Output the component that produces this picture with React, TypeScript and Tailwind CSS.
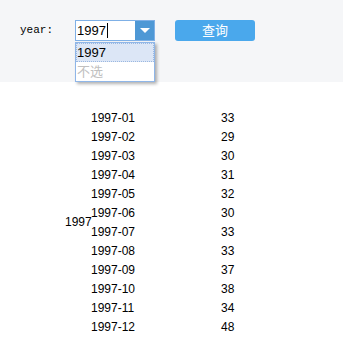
import React from "react";

const rows: [string, number][] = [
  ["1997-01", 33],
  ["1997-02", 29],
  ["1997-03", 30],
  ["1997-04", 31],
  ["1997-05", 32],
  ["1997-06", 30],
  ["1997-07", 33],
  ["1997-08", 33],
  ["1997-09", 37],
  ["1997-10", 38],
  ["1997-11", 34],
  ["1997-12", 48],
];

export default function App() {
  return (
    <div
      className="w-[343px] h-[357px] bg-white text-[12px] text-black relative"
      style={{ fontFamily: '"Liberation Sans", "Noto Sans CJK SC", sans-serif' }}
    >
      <div className="h-[82px] bg-[#f5f6f8] flex items-start pt-[20px] relative">
        <div
          className="ml-[20px] w-[55px] h-[21px] flex items-center text-[11px]"
          style={{ fontFamily: '"Liberation Mono", monospace' }}
        >
          year:
        </div>
        <div className="relative w-[80px] h-[21px]">
          <div className="flex h-[21px] border border-[#7fb0e6] bg-white">
            <div className="flex-1 flex items-center pl-[1px] text-[13px]">
              1997<span className="inline-block w-[1px] h-[15px] bg-black ml-[1px]" />
            </div>
            <div className="w-[19px] bg-[#4e98d5] flex items-center justify-center">
              <div className="w-0 h-0 border-l-[5px] border-r-[5px] border-t-[5px] border-l-transparent border-r-transparent border-t-white" />
            </div>
          </div>
          <div className="absolute left-0 top-[22px] w-[80px] h-[40px] border border-[#8fb6e8] bg-white shadow-[2px_2px_3px_rgba(0,0,0,0.3)] flex flex-col">
            <div className="h-[19px] bg-[#dce6f6] border border-dotted border-[#9bb8e0] flex items-center text-[13px]">
              1997
            </div>
            <div className="h-[19px] flex items-center text-[#c0c0c0] text-[13px] pl-[1px]">
              不选
            </div>
          </div>
        </div>
        <button className="ml-[20px] w-[80px] h-[21px] rounded-[3px] bg-[#4aa8ec] text-white text-[13px] flex items-center justify-center">
          查询
        </button>
      </div>
      <div className="mt-[26px] ml-[65px] flex">
        <div className="w-[26px] flex items-center">1997</div>
        <div className="flex flex-col">
          {rows.map(([d, v]) => (
            <div key={d} className="h-[19px] flex items-center">
              <div className="w-[130px]">{d}</div>
              <div>{v}</div>
            </div>
          ))}
        </div>
      </div>
    </div>
  );
}
